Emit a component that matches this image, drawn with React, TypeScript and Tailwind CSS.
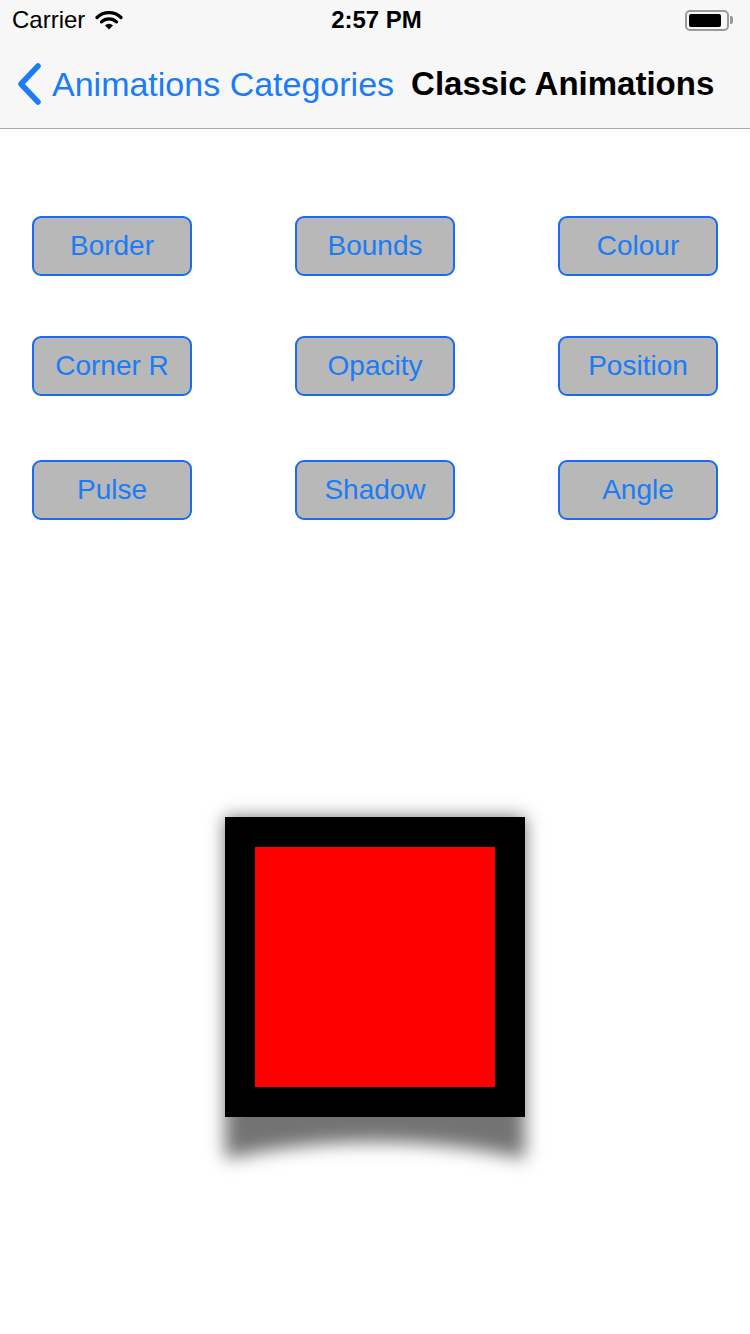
import React from "react";

const font = { fontFamily: '"Liberation Sans", Arial, sans-serif' };

function Btn({ label }: { label: string }) {
  return (
    <div className="w-[160px] h-[60px] rounded-[9px] border-2 border-[#1a6bf0] bg-[#b8b8b8] flex items-center justify-center text-[28px] text-[#1a7cf6]">
      {label}
    </div>
  );
}

export default function App() {
  return (
    <div className="w-[750px] h-[1334px] bg-white relative overflow-hidden" style={font}>
      {/* status + nav */}
      <div className="bg-[#f7f7f7] border-b border-[#a9a9a9] h-[129px]">
        <div className="h-[40px] flex items-center px-[12px] relative">
          <span className="text-[24px] text-black">Carrier</span>
          <svg className="ml-[10px]" width="28" height="20" viewBox="0 0 28 20">
            <path d="M2 7.5 A17 17 0 0 1 26 7.5" stroke="black" strokeWidth="3.2" fill="none" strokeLinecap="round" />
            <path d="M6.5 11.8 A11 11 0 0 1 21.5 11.8" stroke="black" strokeWidth="3.2" fill="none" strokeLinecap="round" />
            <path d="M14 19.5 L10 15.5 A5.6 5.6 0 0 1 18 15.5 Z" fill="black" />
          </svg>
          <span className="absolute left-[3px] right-0 text-center text-[24px] font-bold text-black pointer-events-none">2:57 PM</span>
          <div className="ml-auto flex items-center mr-[5px]">
            <div className="w-[44px] h-[21px] rounded-[5px] border-2 border-[#9a9a9a] p-[2px]">
              <div className="w-[32px] h-full bg-black rounded-[2px]" />
            </div>
            <div className="w-[3px] h-[8px] bg-[#9a9a9a] rounded-r-[2px] ml-[1px]" />
          </div>
        </div>
        <div className="h-[88px] flex items-center px-[16px]">
          <svg width="26" height="42" viewBox="0 0 26 42" className="mr-[10px]">
            <path d="M22 3 L5 21 L22 39" stroke="#1a7cf6" strokeWidth="5.5" fill="none" strokeLinecap="round" strokeLinejoin="round" />
          </svg>
          <span className="text-[34px] text-[#1a7cf6]">Animations Categories</span>
          <span className="ml-[17px] text-[33px] font-bold text-black">Classic Animations</span>
        </div>
      </div>

      {/* buttons */}
      <div className="pl-[32px] pr-[32px]">
        <div className="mt-[87px] flex justify-between">
          <Btn label="Border" />
          <Btn label="Bounds" />
          <Btn label="Colour" />
        </div>
        <div className="mt-[60px] flex justify-between">
          <Btn label="Corner R" />
          <Btn label="Opacity" />
          <Btn label="Position" />
        </div>
        <div className="mt-[64px] flex justify-between">
          <Btn label="Pulse" />
          <Btn label="Shadow" />
          <Btn label="Angle" />
        </div>
      </div>

      {/* square */}
      <div className="mt-[297px] flex justify-center">
        <div className="relative w-[300px] h-[300px]">
          <svg className="absolute left-[-30px] top-[-30px]" width="360" height="430" viewBox="0 0 360 430" style={{ overflow: "visible" }}>
            <defs>
              <filter id="blur" x="-20%" y="-20%" width="140%" height="140%">
                <feGaussianBlur stdDeviation="9" />
              </filter>
            </defs>
            <path d="M30 30 L330 30 L330 372 Q180 338 30 372 Z" fill="rgba(0,0,0,0.55)" filter="url(#blur)" />
          </svg>
          <div className="relative w-[300px] h-[300px] bg-black p-[30px]">
            <div className="w-full h-full bg-[#ff0000]" />
          </div>
        </div>
      </div>
    </div>
  );
}
